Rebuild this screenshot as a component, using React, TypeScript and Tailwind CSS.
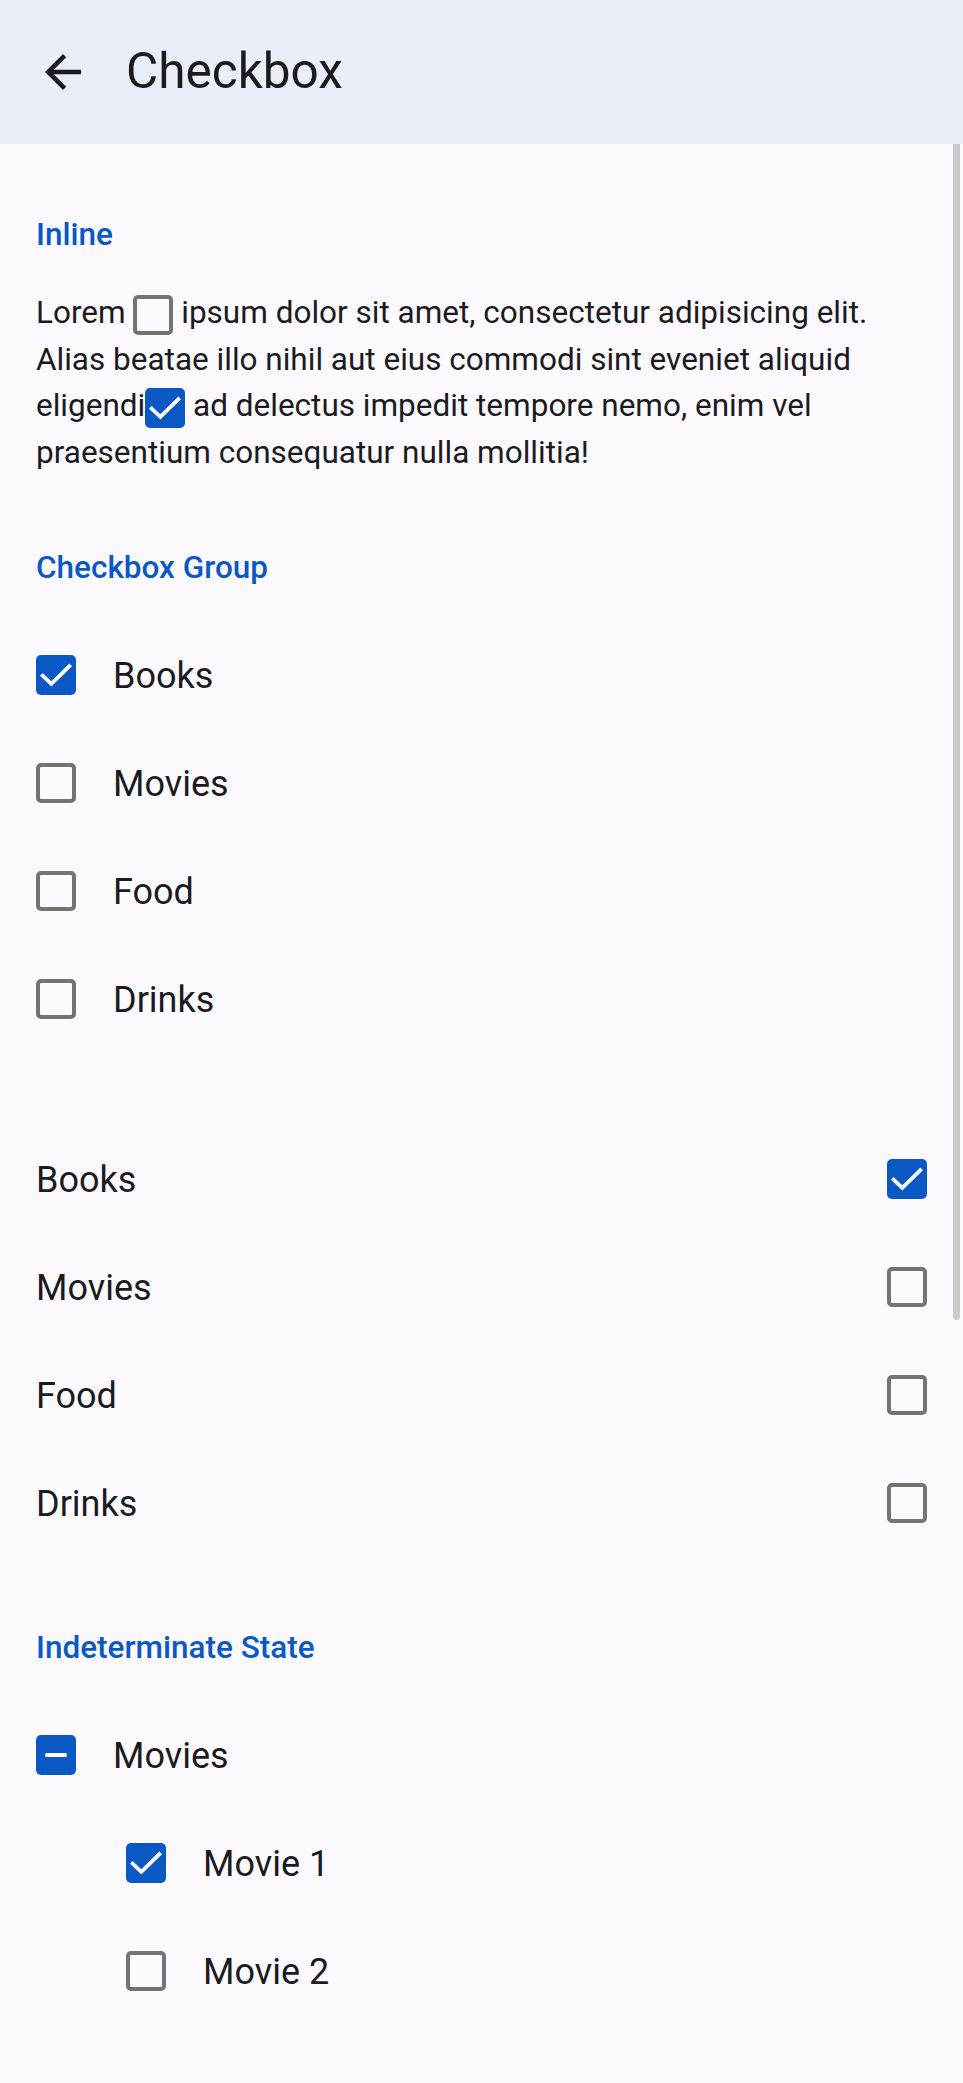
import React from "react";

const BLUE = "bg-[#0a58c4]";

function Box({ state }: { state: "on" | "off" | "mixed" }) {
  if (state === "off") {
    return (
      <span className="inline-block w-[40px] h-[40px] rounded-[5px] border-[4.5px] border-[#747474] shrink-0 align-middle box-border" />
    );
  }
  return (
    <span className={`inline-flex items-center justify-center w-[40px] h-[40px] rounded-[5px] ${BLUE} shrink-0 align-middle`}>
      <svg width="40" height="40" viewBox="0 0 18 18" fill="none">
        {state === "on" ? (
          <path d="M3 9.3 L6.9 13 L15 5" stroke="#ffffff" strokeWidth="1.7" strokeLinecap="square" strokeLinejoin="miter" />
        ) : (
          <path d="M4.9 9 H13.1" stroke="#ffffff" strokeWidth="1.8" strokeLinecap="round" />
        )}
      </svg>
    </span>
  );
}

function SectionTitle({ children, className = "" }: { children: React.ReactNode; className?: string }) {
  return (
    <div className={`text-[31.5px] leading-[45px] font-medium text-[#0a58c4] ${className}`}>{children}</div>
  );
}

function LeadRow({ label, state, indent = false }: { label: string; state: "on" | "off" | "mixed"; indent?: boolean }) {
  return (
    <div className={`flex items-center h-[108px] ${indent ? "pl-[90px]" : ""}`}>
      <Box state={state} />
      <span className="ml-[37px] pt-[2px] text-[36px] text-[#1b1b1f]">{label}</span>
    </div>
  );
}

function TrailRow({ label, state }: { label: string; state: "on" | "off" }) {
  return (
    <div className="flex items-center justify-between h-[108px]">
      <span className="pt-[2px] text-[36px] text-[#1b1b1f]">{label}</span>
      <Box state={state} />
    </div>
  );
}

export default function App() {
  return (
    <div
      className="relative min-h-[2083px] bg-[#fdfaff] text-[#1b1b1f]"
      style={{ fontFamily: "Roboto, 'Noto Sans', sans-serif" }}
    >
      <header className="flex items-center h-[144px] bg-[#e9eef9] pl-[36px]">
        <svg width="54" height="54" viewBox="0 0 24 24" fill="#1b1b1f">
          <path d="M20 11H7.83l5.59-5.59L12 4l-8 8 8 8 1.41-1.41L7.83 13H20v-2z" />
        </svg>
        <h1 className="ml-[36px] text-[49.5px] leading-none font-normal text-[#1b1b1f]">Checkbox</h1>
      </header>

      <main className="px-[36px] pb-[60px]">
        <SectionTitle className="pt-[68px]">Inline</SectionTitle>
        <p className="mt-[33px] text-[31.5px] leading-[46.7px] text-[#1b1b1f]">
          Lorem <Box state="off" /> ipsum dolor sit amet, consectetur adipisicing elit. Alias beatae illo nihil aut eius
          commodi sint eveniet aliquid eligendi<Box state="on" /> ad delectus impedit tempore nemo, enim vel praesentium
          consequatur nulla mollitia!
        </p>

        <SectionTitle className="mt-[68px]">Checkbox Group</SectionTitle>
        <div className="mt-[31px]">
          <LeadRow label="Books" state="on" />
          <LeadRow label="Movies" state="off" />
          <LeadRow label="Food" state="off" />
          <LeadRow label="Drinks" state="off" />
        </div>

        <div className="mt-[72px]">
          <TrailRow label="Books" state="on" />
          <TrailRow label="Movies" state="off" />
          <TrailRow label="Food" state="off" />
          <TrailRow label="Drinks" state="off" />
        </div>

        <SectionTitle className="mt-[68px]">Indeterminate State</SectionTitle>
        <div className="mt-[31px]">
          <LeadRow label="Movies" state="mixed" />
          <LeadRow label="Movie 1" state="on" indent />
          <LeadRow label="Movie 2" state="off" indent />
        </div>
      </main>

      <div className="absolute right-[3px] top-[144px] w-[7px] h-[1176px] bg-[#cccccc] rounded-b-full" />
    </div>
  );
}
